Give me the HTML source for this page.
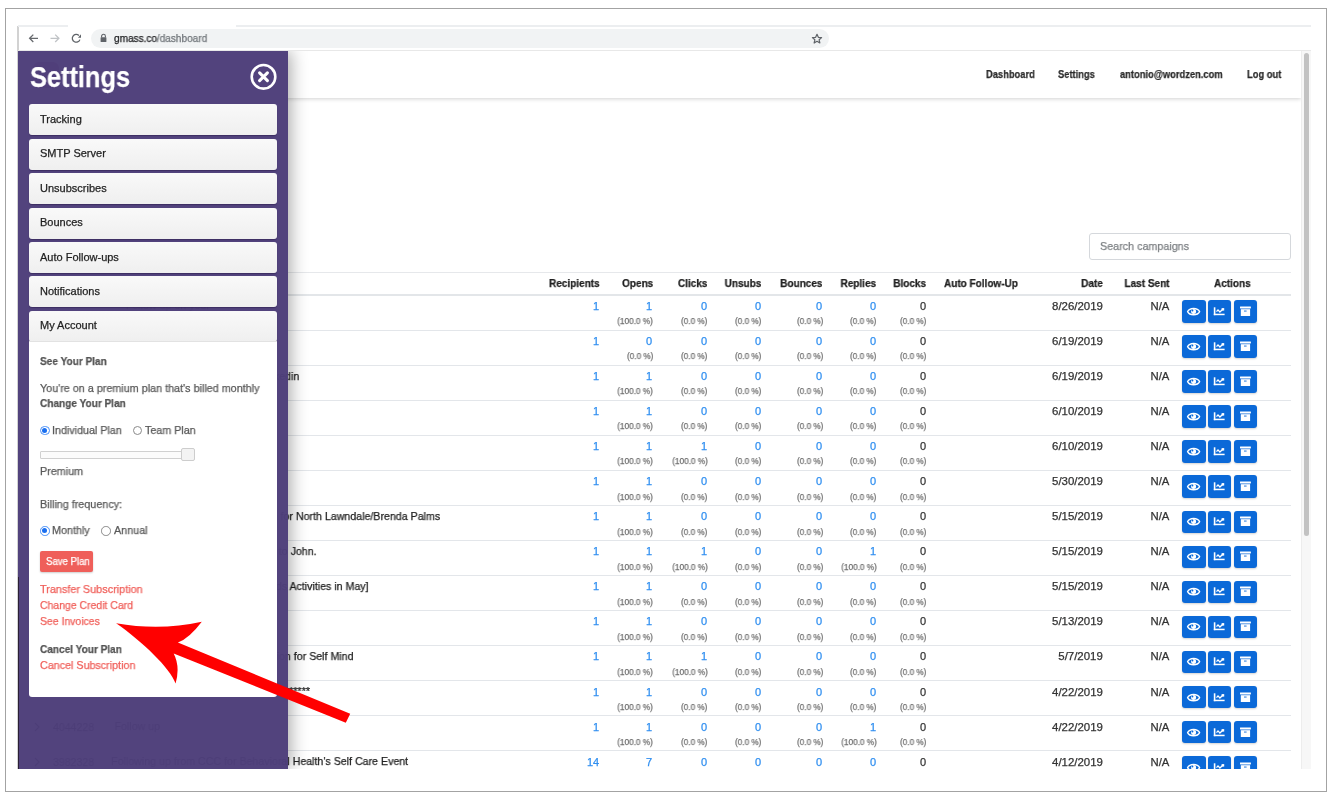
<!DOCTYPE html>
<html><head><meta charset="utf-8">
<style>
*{box-sizing:border-box;margin:0;padding:0}
html,body{width:1336px;height:800px;overflow:hidden;background:#fff}
body{position:relative;font-family:"Liberation Sans",sans-serif;color:#222}
.a{position:absolute}
.t{position:absolute;white-space:nowrap;line-height:1;will-change:transform;-webkit-text-stroke:0.25px currentColor}
.L{position:absolute;left:0;top:0;width:1336px;height:800px}
#clip{clip-path:inset(51px 25px 31px 18px)}
.hl{position:absolute;left:32px;width:1259px;height:1px;background:#e3e6ea}
.btn{position:absolute;width:23.6px;height:22.6px;border-radius:3px;background:#0b69d8;box-shadow:0 1px 2px rgba(0,0,0,.18)}
.btn svg{position:absolute;left:0;top:0.8px}
.sbtn{position:absolute;left:29px;width:248px;height:31px;border-radius:3px;background:linear-gradient(#f9f9f9,#efefef);box-shadow:0 1px 1px rgba(20,10,50,.35)}
.radio{position:absolute;width:9.5px;height:9.5px;border-radius:50%;border:1px solid #8a8a8a;background:#fff}
.radio.on{border:1px solid #4a90f7;background:#fff}
.radio.on:after{content:"";position:absolute;left:1.25px;top:1.25px;width:5px;height:5px;border-radius:50%;background:#1a6ff0}
</style></head><body>
<div class="a" style="left:5px;top:8px;width:1322px;height:784px;border:1px solid #a3a3a3"></div>
<div class="a" style="left:17px;top:25.5px;width:1.5px;height:743.5px;background:#d2d2d2"></div>
<div class="a" style="left:18px;top:25px;width:50px;height:1.5px;background:#eceef0"></div>
<div class="a" style="left:236px;top:25px;width:1075px;height:1.5px;background:#eceef0"></div>
<div class="a" style="left:18px;top:50px;width:1293px;height:1px;background:#e8e8e8"></div>
<svg class="a" style="left:26px;top:31px" width="60" height="15" viewBox="0 0 60 15">
<g fill="none" stroke-width="1.3" stroke-linecap="butt">
<path d="M3.6 7.3 H12 M7.3 3.6 L3.6 7.3 L7.3 11" stroke="#66696d"/>
<path d="M24.5 7.3 H32.9 M29.2 3.6 L32.9 7.3 L29.2 11" stroke="#c0c3c6"/>
<path d="M52.9 4.5 A3.9 3.9 0 1 0 53.9 8.6" stroke="#5f6368" stroke-width="1.25"/>
</g>
<path d="M52 6.8 L55 6.8 L55 3.3 Z" fill="#5f6368"/>
</svg>
<div class="a" style="left:91px;top:29px;width:738px;height:19px;border-radius:9.5px;background:#f1f3f4"></div>
<svg class="a" style="left:99px;top:33px" width="9" height="10" viewBox="0 0 9 10">
<path d="M2.6 4.5 V3.2 A1.9 1.9 0 0 1 6.4 3.2 V4.5" fill="none" stroke="#5f6368" stroke-width="1.1"/>
<rect x="1.6" y="4.3" width="5.8" height="4.7" rx="0.5" fill="#5f6368"/>
</svg>
<div class="t" style="top:34.33px;font-size:10.2px;color:#202124;left:114.40px;transform:scaleX(0.985);transform-origin:0 0;">gmass.co<span style="color:#70757a">/dashboard</span></div>
<svg class="a" style="left:811.2px;top:32.8px" width="12" height="12" viewBox="0 0 12 12">
<path d="M6 1.3 L7.35 4.3 L10.6 4.6 L8.15 6.8 L8.85 10 L6 8.35 L3.15 10 L3.85 6.8 L1.4 4.6 L4.65 4.3 Z" fill="none" stroke="#5f6368" stroke-width="1.2" stroke-linejoin="round"/>
</svg>
<div class="L" id="clip">
<div class="a" style="left:18px;top:51px;width:1283px;height:47px;background:#fff;box-shadow:0 1px 4px rgba(0,0,0,.18)"></div>
<div class="t" style="top:69.15px;font-size:11px;color:#2b2b2b;font-weight:bold;left:986.00px;transform:scaleX(0.85);transform-origin:0 0;">Dashboard</div>
<div class="t" style="top:69.15px;font-size:11px;color:#2b2b2b;font-weight:bold;left:1058.40px;transform:scaleX(0.85);transform-origin:0 0;">Settings</div>
<div class="t" style="top:69.15px;font-size:11px;color:#2b2b2b;font-weight:bold;left:1119.50px;transform:scaleX(0.85);transform-origin:0 0;">antonio@wordzen.com</div>
<div class="t" style="top:69.15px;font-size:11px;color:#2b2b2b;font-weight:bold;left:1247.20px;transform:scaleX(0.85);transform-origin:0 0;">Log out</div>
<div class="a" style="left:1089px;top:233px;width:202px;height:27px;border:1px solid #d5d8dc;border-radius:3px;background:#fff"></div>
<div class="t" style="top:241.22px;font-size:11.5px;color:#7d8084;left:1100.20px;transform:scaleX(0.935);transform-origin:0 0;">Search campaigns</div>
<div class="hl" style="top:272px;background:#e6e8eb"></div>
<div class="hl" style="top:294px;height:2px;background:#e3e6e9"></div>
<div class="t" style="top:278.15px;font-size:11px;color:#222;font-weight:bold;right:736.20px;transform:scaleX(0.91);transform-origin:100% 0;">Recipients</div>
<div class="t" style="top:278.15px;font-size:11px;color:#222;font-weight:bold;right:682.30px;transform:scaleX(0.91);transform-origin:100% 0;">Opens</div>
<div class="t" style="top:278.15px;font-size:11px;color:#222;font-weight:bold;right:628.40px;transform:scaleX(0.91);transform-origin:100% 0;">Clicks</div>
<div class="t" style="top:278.15px;font-size:11px;color:#222;font-weight:bold;right:574.50px;transform:scaleX(0.91);transform-origin:100% 0;">Unsubs</div>
<div class="t" style="top:278.15px;font-size:11px;color:#222;font-weight:bold;right:513.80px;transform:scaleX(0.91);transform-origin:100% 0;">Bounces</div>
<div class="t" style="top:278.15px;font-size:11px;color:#222;font-weight:bold;right:459.90px;transform:scaleX(0.91);transform-origin:100% 0;">Replies</div>
<div class="t" style="top:278.15px;font-size:11px;color:#222;font-weight:bold;right:410.10px;transform:scaleX(0.91);transform-origin:100% 0;">Blocks</div>
<div class="t" style="top:278.15px;font-size:11px;color:#222;font-weight:bold;right:233.40px;transform:scaleX(0.91);transform-origin:100% 0;">Date</div>
<div class="t" style="top:278.15px;font-size:11px;color:#222;font-weight:bold;right:166.70px;transform:scaleX(0.91);transform-origin:100% 0;">Last Sent</div>
<div class="t" style="top:278.15px;font-size:11px;color:#222;font-weight:bold;left:944.00px;transform:scaleX(0.91);transform-origin:0 0;">Auto Follow-Up</div>
<div class="t" style="top:278.15px;font-size:11px;color:#222;font-weight:bold;left:1213.60px;transform:scaleX(0.91);transform-origin:0 0;">Actions</div>
<div class="t" style="top:300.95px;font-size:11px;color:#2f8ef0;right:737.20px;">1</div>
<div class="t" style="top:300.95px;font-size:11px;color:#2f8ef0;right:683.50px;">1</div>
<div class="t" style="top:317.27px;font-size:8.5px;color:#6f6f6f;right:683.00px;transform:scaleX(0.965);transform-origin:100% 0;">(100.0 %)</div>
<div class="t" style="top:300.95px;font-size:11px;color:#2f8ef0;right:628.80px;">0</div>
<div class="t" style="top:317.27px;font-size:8.5px;color:#6f6f6f;right:628.30px;transform:scaleX(0.965);transform-origin:100% 0;">(0.0 %)</div>
<div class="t" style="top:300.95px;font-size:11px;color:#2f8ef0;right:574.70px;">0</div>
<div class="t" style="top:317.27px;font-size:8.5px;color:#6f6f6f;right:574.20px;transform:scaleX(0.965);transform-origin:100% 0;">(0.0 %)</div>
<div class="t" style="top:300.95px;font-size:11px;color:#2f8ef0;right:513.60px;">0</div>
<div class="t" style="top:317.27px;font-size:8.5px;color:#6f6f6f;right:513.10px;transform:scaleX(0.965);transform-origin:100% 0;">(0.0 %)</div>
<div class="t" style="top:300.95px;font-size:11px;color:#2f8ef0;right:459.80px;">0</div>
<div class="t" style="top:317.27px;font-size:8.5px;color:#6f6f6f;right:459.30px;transform:scaleX(0.965);transform-origin:100% 0;">(0.0 %)</div>
<div class="t" style="top:300.95px;font-size:11px;color:#333;right:409.80px;">0</div>
<div class="t" style="top:317.27px;font-size:8.5px;color:#6f6f6f;right:409.30px;transform:scaleX(0.965);transform-origin:100% 0;">(0.0 %)</div>
<div class="t" style="top:300.95px;font-size:11px;color:#333;right:233.40px;transform:scaleX(1.04);transform-origin:100% 0;">8/26/2019</div>
<div class="t" style="top:300.95px;font-size:11px;color:#333;right:166.70px;transform:scaleX(1.03);transform-origin:100% 0;">N/A</div>
<div class="btn" style="left:1181.6px;top:300.2px;width:24px"><svg width="23" height="22" viewBox="0 0 23 22"><path d="M5.6 10.6 C7.6 6.4 15.6 6.4 17.6 10.6 C15.6 14.8 7.6 14.8 5.6 10.6 Z" fill="none" stroke="#fff" stroke-width="1.35"/><circle cx="11.6" cy="10.6" r="2.5" fill="#fff"/><circle cx="10.5" cy="9.5" r="0.9" fill="#0b69d8"/></svg></div>
<div class="btn" style="left:1208.3px;top:300.2px;width:22.8px"><svg width="23" height="22" viewBox="0 0 23 22"><rect x="5.8" y="6.3" width="1.6" height="7.9" fill="#fff"/><rect x="5.8" y="12.7" width="10.8" height="1.5" fill="#fff"/><path d="M8.5 10.6 L10 8.9 L11.9 11 L14.8 8.2" fill="none" stroke="#fff" stroke-width="1.3"/><rect x="13.6" y="7.1" width="2.6" height="2.5" fill="#fff"/></svg></div>
<div class="btn" style="left:1233.9px;top:300.2px;width:22.9px"><svg width="23" height="22" viewBox="0 0 23 22"><rect x="6" y="5.5" width="10.9" height="1.9" rx="0.3" fill="#fff"/><rect x="6.8" y="8.2" width="9.3" height="6.8" fill="#fff"/><rect x="10" y="9.6" width="2.6" height="0.9" fill="#0b69d8"/></svg></div>
<div class="hl" style="top:329.80px"></div>
<div class="t" style="top:336.00px;font-size:11px;color:#2f8ef0;right:737.20px;">1</div>
<div class="t" style="top:336.00px;font-size:11px;color:#2f8ef0;right:683.50px;">0</div>
<div class="t" style="top:352.32px;font-size:8.5px;color:#6f6f6f;right:683.00px;transform:scaleX(0.965);transform-origin:100% 0;">(0.0 %)</div>
<div class="t" style="top:336.00px;font-size:11px;color:#2f8ef0;right:628.80px;">0</div>
<div class="t" style="top:352.32px;font-size:8.5px;color:#6f6f6f;right:628.30px;transform:scaleX(0.965);transform-origin:100% 0;">(0.0 %)</div>
<div class="t" style="top:336.00px;font-size:11px;color:#2f8ef0;right:574.70px;">0</div>
<div class="t" style="top:352.32px;font-size:8.5px;color:#6f6f6f;right:574.20px;transform:scaleX(0.965);transform-origin:100% 0;">(0.0 %)</div>
<div class="t" style="top:336.00px;font-size:11px;color:#2f8ef0;right:513.60px;">0</div>
<div class="t" style="top:352.32px;font-size:8.5px;color:#6f6f6f;right:513.10px;transform:scaleX(0.965);transform-origin:100% 0;">(0.0 %)</div>
<div class="t" style="top:336.00px;font-size:11px;color:#2f8ef0;right:459.80px;">0</div>
<div class="t" style="top:352.32px;font-size:8.5px;color:#6f6f6f;right:459.30px;transform:scaleX(0.965);transform-origin:100% 0;">(0.0 %)</div>
<div class="t" style="top:336.00px;font-size:11px;color:#333;right:409.80px;">0</div>
<div class="t" style="top:352.32px;font-size:8.5px;color:#6f6f6f;right:409.30px;transform:scaleX(0.965);transform-origin:100% 0;">(0.0 %)</div>
<div class="t" style="top:336.00px;font-size:11px;color:#333;right:233.40px;transform:scaleX(1.04);transform-origin:100% 0;">6/19/2019</div>
<div class="t" style="top:336.00px;font-size:11px;color:#333;right:166.70px;transform:scaleX(1.03);transform-origin:100% 0;">N/A</div>
<div class="btn" style="left:1181.6px;top:335.2px;width:24px"><svg width="23" height="22" viewBox="0 0 23 22"><path d="M5.6 10.6 C7.6 6.4 15.6 6.4 17.6 10.6 C15.6 14.8 7.6 14.8 5.6 10.6 Z" fill="none" stroke="#fff" stroke-width="1.35"/><circle cx="11.6" cy="10.6" r="2.5" fill="#fff"/><circle cx="10.5" cy="9.5" r="0.9" fill="#0b69d8"/></svg></div>
<div class="btn" style="left:1208.3px;top:335.2px;width:22.8px"><svg width="23" height="22" viewBox="0 0 23 22"><rect x="5.8" y="6.3" width="1.6" height="7.9" fill="#fff"/><rect x="5.8" y="12.7" width="10.8" height="1.5" fill="#fff"/><path d="M8.5 10.6 L10 8.9 L11.9 11 L14.8 8.2" fill="none" stroke="#fff" stroke-width="1.3"/><rect x="13.6" y="7.1" width="2.6" height="2.5" fill="#fff"/></svg></div>
<div class="btn" style="left:1233.9px;top:335.2px;width:22.9px"><svg width="23" height="22" viewBox="0 0 23 22"><rect x="6" y="5.5" width="10.9" height="1.9" rx="0.3" fill="#fff"/><rect x="6.8" y="8.2" width="9.3" height="6.8" fill="#fff"/><rect x="10" y="9.6" width="2.6" height="0.9" fill="#0b69d8"/></svg></div>
<div class="hl" style="top:364.83px"></div>
<div class="t" style="top:371.05px;font-size:11px;color:#2f8ef0;right:737.20px;">1</div>
<div class="t" style="top:371.05px;font-size:11px;color:#2f8ef0;right:683.50px;">1</div>
<div class="t" style="top:387.37px;font-size:8.5px;color:#6f6f6f;right:683.00px;transform:scaleX(0.965);transform-origin:100% 0;">(100.0 %)</div>
<div class="t" style="top:371.05px;font-size:11px;color:#2f8ef0;right:628.80px;">0</div>
<div class="t" style="top:387.37px;font-size:8.5px;color:#6f6f6f;right:628.30px;transform:scaleX(0.965);transform-origin:100% 0;">(0.0 %)</div>
<div class="t" style="top:371.05px;font-size:11px;color:#2f8ef0;right:574.70px;">0</div>
<div class="t" style="top:387.37px;font-size:8.5px;color:#6f6f6f;right:574.20px;transform:scaleX(0.965);transform-origin:100% 0;">(0.0 %)</div>
<div class="t" style="top:371.05px;font-size:11px;color:#2f8ef0;right:513.60px;">0</div>
<div class="t" style="top:387.37px;font-size:8.5px;color:#6f6f6f;right:513.10px;transform:scaleX(0.965);transform-origin:100% 0;">(0.0 %)</div>
<div class="t" style="top:371.05px;font-size:11px;color:#2f8ef0;right:459.80px;">0</div>
<div class="t" style="top:387.37px;font-size:8.5px;color:#6f6f6f;right:459.30px;transform:scaleX(0.965);transform-origin:100% 0;">(0.0 %)</div>
<div class="t" style="top:371.05px;font-size:11px;color:#333;right:409.80px;">0</div>
<div class="t" style="top:387.37px;font-size:8.5px;color:#6f6f6f;right:409.30px;transform:scaleX(0.965);transform-origin:100% 0;">(0.0 %)</div>
<div class="t" style="top:371.05px;font-size:11px;color:#333;right:233.40px;transform:scaleX(1.04);transform-origin:100% 0;">6/19/2019</div>
<div class="t" style="top:371.05px;font-size:11px;color:#333;right:166.70px;transform:scaleX(1.03);transform-origin:100% 0;">N/A</div>
<div class="btn" style="left:1181.6px;top:370.3px;width:24px"><svg width="23" height="22" viewBox="0 0 23 22"><path d="M5.6 10.6 C7.6 6.4 15.6 6.4 17.6 10.6 C15.6 14.8 7.6 14.8 5.6 10.6 Z" fill="none" stroke="#fff" stroke-width="1.35"/><circle cx="11.6" cy="10.6" r="2.5" fill="#fff"/><circle cx="10.5" cy="9.5" r="0.9" fill="#0b69d8"/></svg></div>
<div class="btn" style="left:1208.3px;top:370.3px;width:22.8px"><svg width="23" height="22" viewBox="0 0 23 22"><rect x="5.8" y="6.3" width="1.6" height="7.9" fill="#fff"/><rect x="5.8" y="12.7" width="10.8" height="1.5" fill="#fff"/><path d="M8.5 10.6 L10 8.9 L11.9 11 L14.8 8.2" fill="none" stroke="#fff" stroke-width="1.3"/><rect x="13.6" y="7.1" width="2.6" height="2.5" fill="#fff"/></svg></div>
<div class="btn" style="left:1233.9px;top:370.3px;width:22.9px"><svg width="23" height="22" viewBox="0 0 23 22"><rect x="6" y="5.5" width="10.9" height="1.9" rx="0.3" fill="#fff"/><rect x="6.8" y="8.2" width="9.3" height="6.8" fill="#fff"/><rect x="10" y="9.6" width="2.6" height="0.9" fill="#0b69d8"/></svg></div>
<div class="hl" style="top:399.86px"></div>
<div class="t" style="top:406.10px;font-size:11px;color:#2f8ef0;right:737.20px;">1</div>
<div class="t" style="top:406.10px;font-size:11px;color:#2f8ef0;right:683.50px;">1</div>
<div class="t" style="top:422.42px;font-size:8.5px;color:#6f6f6f;right:683.00px;transform:scaleX(0.965);transform-origin:100% 0;">(100.0 %)</div>
<div class="t" style="top:406.10px;font-size:11px;color:#2f8ef0;right:628.80px;">0</div>
<div class="t" style="top:422.42px;font-size:8.5px;color:#6f6f6f;right:628.30px;transform:scaleX(0.965);transform-origin:100% 0;">(0.0 %)</div>
<div class="t" style="top:406.10px;font-size:11px;color:#2f8ef0;right:574.70px;">0</div>
<div class="t" style="top:422.42px;font-size:8.5px;color:#6f6f6f;right:574.20px;transform:scaleX(0.965);transform-origin:100% 0;">(0.0 %)</div>
<div class="t" style="top:406.10px;font-size:11px;color:#2f8ef0;right:513.60px;">0</div>
<div class="t" style="top:422.42px;font-size:8.5px;color:#6f6f6f;right:513.10px;transform:scaleX(0.965);transform-origin:100% 0;">(0.0 %)</div>
<div class="t" style="top:406.10px;font-size:11px;color:#2f8ef0;right:459.80px;">0</div>
<div class="t" style="top:422.42px;font-size:8.5px;color:#6f6f6f;right:459.30px;transform:scaleX(0.965);transform-origin:100% 0;">(0.0 %)</div>
<div class="t" style="top:406.10px;font-size:11px;color:#333;right:409.80px;">0</div>
<div class="t" style="top:422.42px;font-size:8.5px;color:#6f6f6f;right:409.30px;transform:scaleX(0.965);transform-origin:100% 0;">(0.0 %)</div>
<div class="t" style="top:406.10px;font-size:11px;color:#333;right:233.40px;transform:scaleX(1.04);transform-origin:100% 0;">6/10/2019</div>
<div class="t" style="top:406.10px;font-size:11px;color:#333;right:166.70px;transform:scaleX(1.03);transform-origin:100% 0;">N/A</div>
<div class="btn" style="left:1181.6px;top:405.3px;width:24px"><svg width="23" height="22" viewBox="0 0 23 22"><path d="M5.6 10.6 C7.6 6.4 15.6 6.4 17.6 10.6 C15.6 14.8 7.6 14.8 5.6 10.6 Z" fill="none" stroke="#fff" stroke-width="1.35"/><circle cx="11.6" cy="10.6" r="2.5" fill="#fff"/><circle cx="10.5" cy="9.5" r="0.9" fill="#0b69d8"/></svg></div>
<div class="btn" style="left:1208.3px;top:405.3px;width:22.8px"><svg width="23" height="22" viewBox="0 0 23 22"><rect x="5.8" y="6.3" width="1.6" height="7.9" fill="#fff"/><rect x="5.8" y="12.7" width="10.8" height="1.5" fill="#fff"/><path d="M8.5 10.6 L10 8.9 L11.9 11 L14.8 8.2" fill="none" stroke="#fff" stroke-width="1.3"/><rect x="13.6" y="7.1" width="2.6" height="2.5" fill="#fff"/></svg></div>
<div class="btn" style="left:1233.9px;top:405.3px;width:22.9px"><svg width="23" height="22" viewBox="0 0 23 22"><rect x="6" y="5.5" width="10.9" height="1.9" rx="0.3" fill="#fff"/><rect x="6.8" y="8.2" width="9.3" height="6.8" fill="#fff"/><rect x="10" y="9.6" width="2.6" height="0.9" fill="#0b69d8"/></svg></div>
<div class="hl" style="top:434.89px"></div>
<div class="t" style="top:441.15px;font-size:11px;color:#2f8ef0;right:737.20px;">1</div>
<div class="t" style="top:441.15px;font-size:11px;color:#2f8ef0;right:683.50px;">1</div>
<div class="t" style="top:457.47px;font-size:8.5px;color:#6f6f6f;right:683.00px;transform:scaleX(0.965);transform-origin:100% 0;">(100.0 %)</div>
<div class="t" style="top:441.15px;font-size:11px;color:#2f8ef0;right:628.80px;">1</div>
<div class="t" style="top:457.47px;font-size:8.5px;color:#6f6f6f;right:628.30px;transform:scaleX(0.965);transform-origin:100% 0;">(100.0 %)</div>
<div class="t" style="top:441.15px;font-size:11px;color:#2f8ef0;right:574.70px;">0</div>
<div class="t" style="top:457.47px;font-size:8.5px;color:#6f6f6f;right:574.20px;transform:scaleX(0.965);transform-origin:100% 0;">(0.0 %)</div>
<div class="t" style="top:441.15px;font-size:11px;color:#2f8ef0;right:513.60px;">0</div>
<div class="t" style="top:457.47px;font-size:8.5px;color:#6f6f6f;right:513.10px;transform:scaleX(0.965);transform-origin:100% 0;">(0.0 %)</div>
<div class="t" style="top:441.15px;font-size:11px;color:#2f8ef0;right:459.80px;">0</div>
<div class="t" style="top:457.47px;font-size:8.5px;color:#6f6f6f;right:459.30px;transform:scaleX(0.965);transform-origin:100% 0;">(0.0 %)</div>
<div class="t" style="top:441.15px;font-size:11px;color:#333;right:409.80px;">0</div>
<div class="t" style="top:457.47px;font-size:8.5px;color:#6f6f6f;right:409.30px;transform:scaleX(0.965);transform-origin:100% 0;">(0.0 %)</div>
<div class="t" style="top:441.15px;font-size:11px;color:#333;right:233.40px;transform:scaleX(1.04);transform-origin:100% 0;">6/10/2019</div>
<div class="t" style="top:441.15px;font-size:11px;color:#333;right:166.70px;transform:scaleX(1.03);transform-origin:100% 0;">N/A</div>
<div class="btn" style="left:1181.6px;top:440.4px;width:24px"><svg width="23" height="22" viewBox="0 0 23 22"><path d="M5.6 10.6 C7.6 6.4 15.6 6.4 17.6 10.6 C15.6 14.8 7.6 14.8 5.6 10.6 Z" fill="none" stroke="#fff" stroke-width="1.35"/><circle cx="11.6" cy="10.6" r="2.5" fill="#fff"/><circle cx="10.5" cy="9.5" r="0.9" fill="#0b69d8"/></svg></div>
<div class="btn" style="left:1208.3px;top:440.4px;width:22.8px"><svg width="23" height="22" viewBox="0 0 23 22"><rect x="5.8" y="6.3" width="1.6" height="7.9" fill="#fff"/><rect x="5.8" y="12.7" width="10.8" height="1.5" fill="#fff"/><path d="M8.5 10.6 L10 8.9 L11.9 11 L14.8 8.2" fill="none" stroke="#fff" stroke-width="1.3"/><rect x="13.6" y="7.1" width="2.6" height="2.5" fill="#fff"/></svg></div>
<div class="btn" style="left:1233.9px;top:440.4px;width:22.9px"><svg width="23" height="22" viewBox="0 0 23 22"><rect x="6" y="5.5" width="10.9" height="1.9" rx="0.3" fill="#fff"/><rect x="6.8" y="8.2" width="9.3" height="6.8" fill="#fff"/><rect x="10" y="9.6" width="2.6" height="0.9" fill="#0b69d8"/></svg></div>
<div class="hl" style="top:469.92px"></div>
<div class="t" style="top:476.20px;font-size:11px;color:#2f8ef0;right:737.20px;">1</div>
<div class="t" style="top:476.20px;font-size:11px;color:#2f8ef0;right:683.50px;">1</div>
<div class="t" style="top:492.52px;font-size:8.5px;color:#6f6f6f;right:683.00px;transform:scaleX(0.965);transform-origin:100% 0;">(100.0 %)</div>
<div class="t" style="top:476.20px;font-size:11px;color:#2f8ef0;right:628.80px;">0</div>
<div class="t" style="top:492.52px;font-size:8.5px;color:#6f6f6f;right:628.30px;transform:scaleX(0.965);transform-origin:100% 0;">(0.0 %)</div>
<div class="t" style="top:476.20px;font-size:11px;color:#2f8ef0;right:574.70px;">0</div>
<div class="t" style="top:492.52px;font-size:8.5px;color:#6f6f6f;right:574.20px;transform:scaleX(0.965);transform-origin:100% 0;">(0.0 %)</div>
<div class="t" style="top:476.20px;font-size:11px;color:#2f8ef0;right:513.60px;">0</div>
<div class="t" style="top:492.52px;font-size:8.5px;color:#6f6f6f;right:513.10px;transform:scaleX(0.965);transform-origin:100% 0;">(0.0 %)</div>
<div class="t" style="top:476.20px;font-size:11px;color:#2f8ef0;right:459.80px;">0</div>
<div class="t" style="top:492.52px;font-size:8.5px;color:#6f6f6f;right:459.30px;transform:scaleX(0.965);transform-origin:100% 0;">(0.0 %)</div>
<div class="t" style="top:476.20px;font-size:11px;color:#333;right:409.80px;">0</div>
<div class="t" style="top:492.52px;font-size:8.5px;color:#6f6f6f;right:409.30px;transform:scaleX(0.965);transform-origin:100% 0;">(0.0 %)</div>
<div class="t" style="top:476.20px;font-size:11px;color:#333;right:233.40px;transform:scaleX(1.04);transform-origin:100% 0;">5/30/2019</div>
<div class="t" style="top:476.20px;font-size:11px;color:#333;right:166.70px;transform:scaleX(1.03);transform-origin:100% 0;">N/A</div>
<div class="btn" style="left:1181.6px;top:475.4px;width:24px"><svg width="23" height="22" viewBox="0 0 23 22"><path d="M5.6 10.6 C7.6 6.4 15.6 6.4 17.6 10.6 C15.6 14.8 7.6 14.8 5.6 10.6 Z" fill="none" stroke="#fff" stroke-width="1.35"/><circle cx="11.6" cy="10.6" r="2.5" fill="#fff"/><circle cx="10.5" cy="9.5" r="0.9" fill="#0b69d8"/></svg></div>
<div class="btn" style="left:1208.3px;top:475.4px;width:22.8px"><svg width="23" height="22" viewBox="0 0 23 22"><rect x="5.8" y="6.3" width="1.6" height="7.9" fill="#fff"/><rect x="5.8" y="12.7" width="10.8" height="1.5" fill="#fff"/><path d="M8.5 10.6 L10 8.9 L11.9 11 L14.8 8.2" fill="none" stroke="#fff" stroke-width="1.3"/><rect x="13.6" y="7.1" width="2.6" height="2.5" fill="#fff"/></svg></div>
<div class="btn" style="left:1233.9px;top:475.4px;width:22.9px"><svg width="23" height="22" viewBox="0 0 23 22"><rect x="6" y="5.5" width="10.9" height="1.9" rx="0.3" fill="#fff"/><rect x="6.8" y="8.2" width="9.3" height="6.8" fill="#fff"/><rect x="10" y="9.6" width="2.6" height="0.9" fill="#0b69d8"/></svg></div>
<div class="hl" style="top:504.95px"></div>
<div class="t" style="top:511.25px;font-size:11px;color:#2f8ef0;right:737.20px;">1</div>
<div class="t" style="top:511.25px;font-size:11px;color:#2f8ef0;right:683.50px;">1</div>
<div class="t" style="top:527.58px;font-size:8.5px;color:#6f6f6f;right:683.00px;transform:scaleX(0.965);transform-origin:100% 0;">(100.0 %)</div>
<div class="t" style="top:511.25px;font-size:11px;color:#2f8ef0;right:628.80px;">0</div>
<div class="t" style="top:527.58px;font-size:8.5px;color:#6f6f6f;right:628.30px;transform:scaleX(0.965);transform-origin:100% 0;">(0.0 %)</div>
<div class="t" style="top:511.25px;font-size:11px;color:#2f8ef0;right:574.70px;">0</div>
<div class="t" style="top:527.58px;font-size:8.5px;color:#6f6f6f;right:574.20px;transform:scaleX(0.965);transform-origin:100% 0;">(0.0 %)</div>
<div class="t" style="top:511.25px;font-size:11px;color:#2f8ef0;right:513.60px;">0</div>
<div class="t" style="top:527.58px;font-size:8.5px;color:#6f6f6f;right:513.10px;transform:scaleX(0.965);transform-origin:100% 0;">(0.0 %)</div>
<div class="t" style="top:511.25px;font-size:11px;color:#2f8ef0;right:459.80px;">0</div>
<div class="t" style="top:527.58px;font-size:8.5px;color:#6f6f6f;right:459.30px;transform:scaleX(0.965);transform-origin:100% 0;">(0.0 %)</div>
<div class="t" style="top:511.25px;font-size:11px;color:#333;right:409.80px;">0</div>
<div class="t" style="top:527.58px;font-size:8.5px;color:#6f6f6f;right:409.30px;transform:scaleX(0.965);transform-origin:100% 0;">(0.0 %)</div>
<div class="t" style="top:511.25px;font-size:11px;color:#333;right:233.40px;transform:scaleX(1.04);transform-origin:100% 0;">5/15/2019</div>
<div class="t" style="top:511.25px;font-size:11px;color:#333;right:166.70px;transform:scaleX(1.03);transform-origin:100% 0;">N/A</div>
<div class="btn" style="left:1181.6px;top:510.5px;width:24px"><svg width="23" height="22" viewBox="0 0 23 22"><path d="M5.6 10.6 C7.6 6.4 15.6 6.4 17.6 10.6 C15.6 14.8 7.6 14.8 5.6 10.6 Z" fill="none" stroke="#fff" stroke-width="1.35"/><circle cx="11.6" cy="10.6" r="2.5" fill="#fff"/><circle cx="10.5" cy="9.5" r="0.9" fill="#0b69d8"/></svg></div>
<div class="btn" style="left:1208.3px;top:510.5px;width:22.8px"><svg width="23" height="22" viewBox="0 0 23 22"><rect x="5.8" y="6.3" width="1.6" height="7.9" fill="#fff"/><rect x="5.8" y="12.7" width="10.8" height="1.5" fill="#fff"/><path d="M8.5 10.6 L10 8.9 L11.9 11 L14.8 8.2" fill="none" stroke="#fff" stroke-width="1.3"/><rect x="13.6" y="7.1" width="2.6" height="2.5" fill="#fff"/></svg></div>
<div class="btn" style="left:1233.9px;top:510.5px;width:22.9px"><svg width="23" height="22" viewBox="0 0 23 22"><rect x="6" y="5.5" width="10.9" height="1.9" rx="0.3" fill="#fff"/><rect x="6.8" y="8.2" width="9.3" height="6.8" fill="#fff"/><rect x="10" y="9.6" width="2.6" height="0.9" fill="#0b69d8"/></svg></div>
<div class="hl" style="top:539.98px"></div>
<div class="t" style="top:546.30px;font-size:11px;color:#2f8ef0;right:737.20px;">1</div>
<div class="t" style="top:546.30px;font-size:11px;color:#2f8ef0;right:683.50px;">1</div>
<div class="t" style="top:562.62px;font-size:8.5px;color:#6f6f6f;right:683.00px;transform:scaleX(0.965);transform-origin:100% 0;">(100.0 %)</div>
<div class="t" style="top:546.30px;font-size:11px;color:#2f8ef0;right:628.80px;">1</div>
<div class="t" style="top:562.62px;font-size:8.5px;color:#6f6f6f;right:628.30px;transform:scaleX(0.965);transform-origin:100% 0;">(100.0 %)</div>
<div class="t" style="top:546.30px;font-size:11px;color:#2f8ef0;right:574.70px;">0</div>
<div class="t" style="top:562.62px;font-size:8.5px;color:#6f6f6f;right:574.20px;transform:scaleX(0.965);transform-origin:100% 0;">(0.0 %)</div>
<div class="t" style="top:546.30px;font-size:11px;color:#2f8ef0;right:513.60px;">0</div>
<div class="t" style="top:562.62px;font-size:8.5px;color:#6f6f6f;right:513.10px;transform:scaleX(0.965);transform-origin:100% 0;">(0.0 %)</div>
<div class="t" style="top:546.30px;font-size:11px;color:#2f8ef0;right:459.80px;">1</div>
<div class="t" style="top:562.62px;font-size:8.5px;color:#6f6f6f;right:459.30px;transform:scaleX(0.965);transform-origin:100% 0;">(100.0 %)</div>
<div class="t" style="top:546.30px;font-size:11px;color:#333;right:409.80px;">0</div>
<div class="t" style="top:562.62px;font-size:8.5px;color:#6f6f6f;right:409.30px;transform:scaleX(0.965);transform-origin:100% 0;">(0.0 %)</div>
<div class="t" style="top:546.30px;font-size:11px;color:#333;right:233.40px;transform:scaleX(1.04);transform-origin:100% 0;">5/15/2019</div>
<div class="t" style="top:546.30px;font-size:11px;color:#333;right:166.70px;transform:scaleX(1.03);transform-origin:100% 0;">N/A</div>
<div class="btn" style="left:1181.6px;top:545.5px;width:24px"><svg width="23" height="22" viewBox="0 0 23 22"><path d="M5.6 10.6 C7.6 6.4 15.6 6.4 17.6 10.6 C15.6 14.8 7.6 14.8 5.6 10.6 Z" fill="none" stroke="#fff" stroke-width="1.35"/><circle cx="11.6" cy="10.6" r="2.5" fill="#fff"/><circle cx="10.5" cy="9.5" r="0.9" fill="#0b69d8"/></svg></div>
<div class="btn" style="left:1208.3px;top:545.5px;width:22.8px"><svg width="23" height="22" viewBox="0 0 23 22"><rect x="5.8" y="6.3" width="1.6" height="7.9" fill="#fff"/><rect x="5.8" y="12.7" width="10.8" height="1.5" fill="#fff"/><path d="M8.5 10.6 L10 8.9 L11.9 11 L14.8 8.2" fill="none" stroke="#fff" stroke-width="1.3"/><rect x="13.6" y="7.1" width="2.6" height="2.5" fill="#fff"/></svg></div>
<div class="btn" style="left:1233.9px;top:545.5px;width:22.9px"><svg width="23" height="22" viewBox="0 0 23 22"><rect x="6" y="5.5" width="10.9" height="1.9" rx="0.3" fill="#fff"/><rect x="6.8" y="8.2" width="9.3" height="6.8" fill="#fff"/><rect x="10" y="9.6" width="2.6" height="0.9" fill="#0b69d8"/></svg></div>
<div class="hl" style="top:575.01px"></div>
<div class="t" style="top:581.35px;font-size:11px;color:#2f8ef0;right:737.20px;">1</div>
<div class="t" style="top:581.35px;font-size:11px;color:#2f8ef0;right:683.50px;">1</div>
<div class="t" style="top:597.68px;font-size:8.5px;color:#6f6f6f;right:683.00px;transform:scaleX(0.965);transform-origin:100% 0;">(100.0 %)</div>
<div class="t" style="top:581.35px;font-size:11px;color:#2f8ef0;right:628.80px;">0</div>
<div class="t" style="top:597.68px;font-size:8.5px;color:#6f6f6f;right:628.30px;transform:scaleX(0.965);transform-origin:100% 0;">(0.0 %)</div>
<div class="t" style="top:581.35px;font-size:11px;color:#2f8ef0;right:574.70px;">0</div>
<div class="t" style="top:597.68px;font-size:8.5px;color:#6f6f6f;right:574.20px;transform:scaleX(0.965);transform-origin:100% 0;">(0.0 %)</div>
<div class="t" style="top:581.35px;font-size:11px;color:#2f8ef0;right:513.60px;">0</div>
<div class="t" style="top:597.68px;font-size:8.5px;color:#6f6f6f;right:513.10px;transform:scaleX(0.965);transform-origin:100% 0;">(0.0 %)</div>
<div class="t" style="top:581.35px;font-size:11px;color:#2f8ef0;right:459.80px;">0</div>
<div class="t" style="top:597.68px;font-size:8.5px;color:#6f6f6f;right:459.30px;transform:scaleX(0.965);transform-origin:100% 0;">(0.0 %)</div>
<div class="t" style="top:581.35px;font-size:11px;color:#333;right:409.80px;">0</div>
<div class="t" style="top:597.68px;font-size:8.5px;color:#6f6f6f;right:409.30px;transform:scaleX(0.965);transform-origin:100% 0;">(0.0 %)</div>
<div class="t" style="top:581.35px;font-size:11px;color:#333;right:233.40px;transform:scaleX(1.04);transform-origin:100% 0;">5/15/2019</div>
<div class="t" style="top:581.35px;font-size:11px;color:#333;right:166.70px;transform:scaleX(1.03);transform-origin:100% 0;">N/A</div>
<div class="btn" style="left:1181.6px;top:580.6px;width:24px"><svg width="23" height="22" viewBox="0 0 23 22"><path d="M5.6 10.6 C7.6 6.4 15.6 6.4 17.6 10.6 C15.6 14.8 7.6 14.8 5.6 10.6 Z" fill="none" stroke="#fff" stroke-width="1.35"/><circle cx="11.6" cy="10.6" r="2.5" fill="#fff"/><circle cx="10.5" cy="9.5" r="0.9" fill="#0b69d8"/></svg></div>
<div class="btn" style="left:1208.3px;top:580.6px;width:22.8px"><svg width="23" height="22" viewBox="0 0 23 22"><rect x="5.8" y="6.3" width="1.6" height="7.9" fill="#fff"/><rect x="5.8" y="12.7" width="10.8" height="1.5" fill="#fff"/><path d="M8.5 10.6 L10 8.9 L11.9 11 L14.8 8.2" fill="none" stroke="#fff" stroke-width="1.3"/><rect x="13.6" y="7.1" width="2.6" height="2.5" fill="#fff"/></svg></div>
<div class="btn" style="left:1233.9px;top:580.6px;width:22.9px"><svg width="23" height="22" viewBox="0 0 23 22"><rect x="6" y="5.5" width="10.9" height="1.9" rx="0.3" fill="#fff"/><rect x="6.8" y="8.2" width="9.3" height="6.8" fill="#fff"/><rect x="10" y="9.6" width="2.6" height="0.9" fill="#0b69d8"/></svg></div>
<div class="hl" style="top:610.04px"></div>
<div class="t" style="top:616.40px;font-size:11px;color:#2f8ef0;right:737.20px;">1</div>
<div class="t" style="top:616.40px;font-size:11px;color:#2f8ef0;right:683.50px;">1</div>
<div class="t" style="top:632.73px;font-size:8.5px;color:#6f6f6f;right:683.00px;transform:scaleX(0.965);transform-origin:100% 0;">(100.0 %)</div>
<div class="t" style="top:616.40px;font-size:11px;color:#2f8ef0;right:628.80px;">0</div>
<div class="t" style="top:632.73px;font-size:8.5px;color:#6f6f6f;right:628.30px;transform:scaleX(0.965);transform-origin:100% 0;">(0.0 %)</div>
<div class="t" style="top:616.40px;font-size:11px;color:#2f8ef0;right:574.70px;">0</div>
<div class="t" style="top:632.73px;font-size:8.5px;color:#6f6f6f;right:574.20px;transform:scaleX(0.965);transform-origin:100% 0;">(0.0 %)</div>
<div class="t" style="top:616.40px;font-size:11px;color:#2f8ef0;right:513.60px;">0</div>
<div class="t" style="top:632.73px;font-size:8.5px;color:#6f6f6f;right:513.10px;transform:scaleX(0.965);transform-origin:100% 0;">(0.0 %)</div>
<div class="t" style="top:616.40px;font-size:11px;color:#2f8ef0;right:459.80px;">0</div>
<div class="t" style="top:632.73px;font-size:8.5px;color:#6f6f6f;right:459.30px;transform:scaleX(0.965);transform-origin:100% 0;">(0.0 %)</div>
<div class="t" style="top:616.40px;font-size:11px;color:#333;right:409.80px;">0</div>
<div class="t" style="top:632.73px;font-size:8.5px;color:#6f6f6f;right:409.30px;transform:scaleX(0.965);transform-origin:100% 0;">(0.0 %)</div>
<div class="t" style="top:616.40px;font-size:11px;color:#333;right:233.40px;transform:scaleX(1.04);transform-origin:100% 0;">5/13/2019</div>
<div class="t" style="top:616.40px;font-size:11px;color:#333;right:166.70px;transform:scaleX(1.03);transform-origin:100% 0;">N/A</div>
<div class="btn" style="left:1181.6px;top:615.6px;width:24px"><svg width="23" height="22" viewBox="0 0 23 22"><path d="M5.6 10.6 C7.6 6.4 15.6 6.4 17.6 10.6 C15.6 14.8 7.6 14.8 5.6 10.6 Z" fill="none" stroke="#fff" stroke-width="1.35"/><circle cx="11.6" cy="10.6" r="2.5" fill="#fff"/><circle cx="10.5" cy="9.5" r="0.9" fill="#0b69d8"/></svg></div>
<div class="btn" style="left:1208.3px;top:615.6px;width:22.8px"><svg width="23" height="22" viewBox="0 0 23 22"><rect x="5.8" y="6.3" width="1.6" height="7.9" fill="#fff"/><rect x="5.8" y="12.7" width="10.8" height="1.5" fill="#fff"/><path d="M8.5 10.6 L10 8.9 L11.9 11 L14.8 8.2" fill="none" stroke="#fff" stroke-width="1.3"/><rect x="13.6" y="7.1" width="2.6" height="2.5" fill="#fff"/></svg></div>
<div class="btn" style="left:1233.9px;top:615.6px;width:22.9px"><svg width="23" height="22" viewBox="0 0 23 22"><rect x="6" y="5.5" width="10.9" height="1.9" rx="0.3" fill="#fff"/><rect x="6.8" y="8.2" width="9.3" height="6.8" fill="#fff"/><rect x="10" y="9.6" width="2.6" height="0.9" fill="#0b69d8"/></svg></div>
<div class="hl" style="top:645.07px"></div>
<div class="t" style="top:651.45px;font-size:11px;color:#2f8ef0;right:737.20px;">1</div>
<div class="t" style="top:651.45px;font-size:11px;color:#2f8ef0;right:683.50px;">1</div>
<div class="t" style="top:667.77px;font-size:8.5px;color:#6f6f6f;right:683.00px;transform:scaleX(0.965);transform-origin:100% 0;">(100.0 %)</div>
<div class="t" style="top:651.45px;font-size:11px;color:#2f8ef0;right:628.80px;">1</div>
<div class="t" style="top:667.77px;font-size:8.5px;color:#6f6f6f;right:628.30px;transform:scaleX(0.965);transform-origin:100% 0;">(100.0 %)</div>
<div class="t" style="top:651.45px;font-size:11px;color:#2f8ef0;right:574.70px;">0</div>
<div class="t" style="top:667.77px;font-size:8.5px;color:#6f6f6f;right:574.20px;transform:scaleX(0.965);transform-origin:100% 0;">(0.0 %)</div>
<div class="t" style="top:651.45px;font-size:11px;color:#2f8ef0;right:513.60px;">0</div>
<div class="t" style="top:667.77px;font-size:8.5px;color:#6f6f6f;right:513.10px;transform:scaleX(0.965);transform-origin:100% 0;">(0.0 %)</div>
<div class="t" style="top:651.45px;font-size:11px;color:#2f8ef0;right:459.80px;">0</div>
<div class="t" style="top:667.77px;font-size:8.5px;color:#6f6f6f;right:459.30px;transform:scaleX(0.965);transform-origin:100% 0;">(0.0 %)</div>
<div class="t" style="top:651.45px;font-size:11px;color:#333;right:409.80px;">0</div>
<div class="t" style="top:667.77px;font-size:8.5px;color:#6f6f6f;right:409.30px;transform:scaleX(0.965);transform-origin:100% 0;">(0.0 %)</div>
<div class="t" style="top:651.45px;font-size:11px;color:#333;right:233.40px;transform:scaleX(1.04);transform-origin:100% 0;">5/7/2019</div>
<div class="t" style="top:651.45px;font-size:11px;color:#333;right:166.70px;transform:scaleX(1.03);transform-origin:100% 0;">N/A</div>
<div class="btn" style="left:1181.6px;top:650.7px;width:24px"><svg width="23" height="22" viewBox="0 0 23 22"><path d="M5.6 10.6 C7.6 6.4 15.6 6.4 17.6 10.6 C15.6 14.8 7.6 14.8 5.6 10.6 Z" fill="none" stroke="#fff" stroke-width="1.35"/><circle cx="11.6" cy="10.6" r="2.5" fill="#fff"/><circle cx="10.5" cy="9.5" r="0.9" fill="#0b69d8"/></svg></div>
<div class="btn" style="left:1208.3px;top:650.7px;width:22.8px"><svg width="23" height="22" viewBox="0 0 23 22"><rect x="5.8" y="6.3" width="1.6" height="7.9" fill="#fff"/><rect x="5.8" y="12.7" width="10.8" height="1.5" fill="#fff"/><path d="M8.5 10.6 L10 8.9 L11.9 11 L14.8 8.2" fill="none" stroke="#fff" stroke-width="1.3"/><rect x="13.6" y="7.1" width="2.6" height="2.5" fill="#fff"/></svg></div>
<div class="btn" style="left:1233.9px;top:650.7px;width:22.9px"><svg width="23" height="22" viewBox="0 0 23 22"><rect x="6" y="5.5" width="10.9" height="1.9" rx="0.3" fill="#fff"/><rect x="6.8" y="8.2" width="9.3" height="6.8" fill="#fff"/><rect x="10" y="9.6" width="2.6" height="0.9" fill="#0b69d8"/></svg></div>
<div class="hl" style="top:680.10px"></div>
<div class="t" style="top:686.50px;font-size:11px;color:#2f8ef0;right:737.20px;">1</div>
<div class="t" style="top:686.50px;font-size:11px;color:#2f8ef0;right:683.50px;">1</div>
<div class="t" style="top:702.82px;font-size:8.5px;color:#6f6f6f;right:683.00px;transform:scaleX(0.965);transform-origin:100% 0;">(100.0 %)</div>
<div class="t" style="top:686.50px;font-size:11px;color:#2f8ef0;right:628.80px;">0</div>
<div class="t" style="top:702.82px;font-size:8.5px;color:#6f6f6f;right:628.30px;transform:scaleX(0.965);transform-origin:100% 0;">(0.0 %)</div>
<div class="t" style="top:686.50px;font-size:11px;color:#2f8ef0;right:574.70px;">0</div>
<div class="t" style="top:702.82px;font-size:8.5px;color:#6f6f6f;right:574.20px;transform:scaleX(0.965);transform-origin:100% 0;">(0.0 %)</div>
<div class="t" style="top:686.50px;font-size:11px;color:#2f8ef0;right:513.60px;">0</div>
<div class="t" style="top:702.82px;font-size:8.5px;color:#6f6f6f;right:513.10px;transform:scaleX(0.965);transform-origin:100% 0;">(0.0 %)</div>
<div class="t" style="top:686.50px;font-size:11px;color:#2f8ef0;right:459.80px;">0</div>
<div class="t" style="top:702.82px;font-size:8.5px;color:#6f6f6f;right:459.30px;transform:scaleX(0.965);transform-origin:100% 0;">(0.0 %)</div>
<div class="t" style="top:686.50px;font-size:11px;color:#333;right:409.80px;">0</div>
<div class="t" style="top:702.82px;font-size:8.5px;color:#6f6f6f;right:409.30px;transform:scaleX(0.965);transform-origin:100% 0;">(0.0 %)</div>
<div class="t" style="top:686.50px;font-size:11px;color:#333;right:233.40px;transform:scaleX(1.04);transform-origin:100% 0;">4/22/2019</div>
<div class="t" style="top:686.50px;font-size:11px;color:#333;right:166.70px;transform:scaleX(1.03);transform-origin:100% 0;">N/A</div>
<div class="btn" style="left:1181.6px;top:685.8px;width:24px"><svg width="23" height="22" viewBox="0 0 23 22"><path d="M5.6 10.6 C7.6 6.4 15.6 6.4 17.6 10.6 C15.6 14.8 7.6 14.8 5.6 10.6 Z" fill="none" stroke="#fff" stroke-width="1.35"/><circle cx="11.6" cy="10.6" r="2.5" fill="#fff"/><circle cx="10.5" cy="9.5" r="0.9" fill="#0b69d8"/></svg></div>
<div class="btn" style="left:1208.3px;top:685.8px;width:22.8px"><svg width="23" height="22" viewBox="0 0 23 22"><rect x="5.8" y="6.3" width="1.6" height="7.9" fill="#fff"/><rect x="5.8" y="12.7" width="10.8" height="1.5" fill="#fff"/><path d="M8.5 10.6 L10 8.9 L11.9 11 L14.8 8.2" fill="none" stroke="#fff" stroke-width="1.3"/><rect x="13.6" y="7.1" width="2.6" height="2.5" fill="#fff"/></svg></div>
<div class="btn" style="left:1233.9px;top:685.8px;width:22.9px"><svg width="23" height="22" viewBox="0 0 23 22"><rect x="6" y="5.5" width="10.9" height="1.9" rx="0.3" fill="#fff"/><rect x="6.8" y="8.2" width="9.3" height="6.8" fill="#fff"/><rect x="10" y="9.6" width="2.6" height="0.9" fill="#0b69d8"/></svg></div>
<div class="hl" style="top:715.13px"></div>
<div class="t" style="top:721.55px;font-size:11px;color:#2f8ef0;right:737.20px;">1</div>
<div class="t" style="top:721.55px;font-size:11px;color:#2f8ef0;right:683.50px;">1</div>
<div class="t" style="top:737.88px;font-size:8.5px;color:#6f6f6f;right:683.00px;transform:scaleX(0.965);transform-origin:100% 0;">(100.0 %)</div>
<div class="t" style="top:721.55px;font-size:11px;color:#2f8ef0;right:628.80px;">0</div>
<div class="t" style="top:737.88px;font-size:8.5px;color:#6f6f6f;right:628.30px;transform:scaleX(0.965);transform-origin:100% 0;">(0.0 %)</div>
<div class="t" style="top:721.55px;font-size:11px;color:#2f8ef0;right:574.70px;">0</div>
<div class="t" style="top:737.88px;font-size:8.5px;color:#6f6f6f;right:574.20px;transform:scaleX(0.965);transform-origin:100% 0;">(0.0 %)</div>
<div class="t" style="top:721.55px;font-size:11px;color:#2f8ef0;right:513.60px;">0</div>
<div class="t" style="top:737.88px;font-size:8.5px;color:#6f6f6f;right:513.10px;transform:scaleX(0.965);transform-origin:100% 0;">(0.0 %)</div>
<div class="t" style="top:721.55px;font-size:11px;color:#2f8ef0;right:459.80px;">1</div>
<div class="t" style="top:737.88px;font-size:8.5px;color:#6f6f6f;right:459.30px;transform:scaleX(0.965);transform-origin:100% 0;">(100.0 %)</div>
<div class="t" style="top:721.55px;font-size:11px;color:#333;right:409.80px;">0</div>
<div class="t" style="top:737.88px;font-size:8.5px;color:#6f6f6f;right:409.30px;transform:scaleX(0.965);transform-origin:100% 0;">(0.0 %)</div>
<div class="t" style="top:721.55px;font-size:11px;color:#333;right:233.40px;transform:scaleX(1.04);transform-origin:100% 0;">4/22/2019</div>
<div class="t" style="top:721.55px;font-size:11px;color:#333;right:166.70px;transform:scaleX(1.03);transform-origin:100% 0;">N/A</div>
<div class="btn" style="left:1181.6px;top:720.8px;width:24px"><svg width="23" height="22" viewBox="0 0 23 22"><path d="M5.6 10.6 C7.6 6.4 15.6 6.4 17.6 10.6 C15.6 14.8 7.6 14.8 5.6 10.6 Z" fill="none" stroke="#fff" stroke-width="1.35"/><circle cx="11.6" cy="10.6" r="2.5" fill="#fff"/><circle cx="10.5" cy="9.5" r="0.9" fill="#0b69d8"/></svg></div>
<div class="btn" style="left:1208.3px;top:720.8px;width:22.8px"><svg width="23" height="22" viewBox="0 0 23 22"><rect x="5.8" y="6.3" width="1.6" height="7.9" fill="#fff"/><rect x="5.8" y="12.7" width="10.8" height="1.5" fill="#fff"/><path d="M8.5 10.6 L10 8.9 L11.9 11 L14.8 8.2" fill="none" stroke="#fff" stroke-width="1.3"/><rect x="13.6" y="7.1" width="2.6" height="2.5" fill="#fff"/></svg></div>
<div class="btn" style="left:1233.9px;top:720.8px;width:22.9px"><svg width="23" height="22" viewBox="0 0 23 22"><rect x="6" y="5.5" width="10.9" height="1.9" rx="0.3" fill="#fff"/><rect x="6.8" y="8.2" width="9.3" height="6.8" fill="#fff"/><rect x="10" y="9.6" width="2.6" height="0.9" fill="#0b69d8"/></svg></div>
<div class="hl" style="top:750.16px"></div>
<div class="t" style="top:756.60px;font-size:11px;color:#2f8ef0;right:737.20px;">14</div>
<div class="t" style="top:756.60px;font-size:11px;color:#2f8ef0;right:683.50px;">7</div>
<div class="t" style="top:756.60px;font-size:11px;color:#2f8ef0;right:628.80px;">0</div>
<div class="t" style="top:756.60px;font-size:11px;color:#2f8ef0;right:574.70px;">0</div>
<div class="t" style="top:756.60px;font-size:11px;color:#2f8ef0;right:513.60px;">0</div>
<div class="t" style="top:756.60px;font-size:11px;color:#2f8ef0;right:459.80px;">0</div>
<div class="t" style="top:756.60px;font-size:11px;color:#333;right:409.80px;">0</div>
<div class="t" style="top:756.60px;font-size:11px;color:#333;right:233.40px;transform:scaleX(1.04);transform-origin:100% 0;">4/12/2019</div>
<div class="t" style="top:756.60px;font-size:11px;color:#333;right:166.70px;transform:scaleX(1.03);transform-origin:100% 0;">N/A</div>
<div class="btn" style="left:1181.6px;top:755.8px;width:24px"><svg width="23" height="22" viewBox="0 0 23 22"><path d="M5.6 10.6 C7.6 6.4 15.6 6.4 17.6 10.6 C15.6 14.8 7.6 14.8 5.6 10.6 Z" fill="none" stroke="#fff" stroke-width="1.35"/><circle cx="11.6" cy="10.6" r="2.5" fill="#fff"/><circle cx="10.5" cy="9.5" r="0.9" fill="#0b69d8"/></svg></div>
<div class="btn" style="left:1208.3px;top:755.8px;width:22.8px"><svg width="23" height="22" viewBox="0 0 23 22"><rect x="5.8" y="6.3" width="1.6" height="7.9" fill="#fff"/><rect x="5.8" y="12.7" width="10.8" height="1.5" fill="#fff"/><path d="M8.5 10.6 L10 8.9 L11.9 11 L14.8 8.2" fill="none" stroke="#fff" stroke-width="1.3"/><rect x="13.6" y="7.1" width="2.6" height="2.5" fill="#fff"/></svg></div>
<div class="btn" style="left:1233.9px;top:755.8px;width:22.9px"><svg width="23" height="22" viewBox="0 0 23 22"><rect x="6" y="5.5" width="10.9" height="1.9" rx="0.3" fill="#fff"/><rect x="6.8" y="8.2" width="9.3" height="6.8" fill="#fff"/><rect x="10" y="9.6" width="2.6" height="0.9" fill="#0b69d8"/></svg></div>
<div class="t" style="top:300.45px;font-size:11px;color:#222;right:1126.00px;transform:scaleX(0.967);transform-origin:100% 0;">Follow up on your</div>
<div class="t" style="top:335.50px;font-size:11px;color:#222;right:1136.00px;transform:scaleX(0.967);transform-origin:100% 0;">Quick question</div>
<div class="t" style="top:370.55px;font-size:11px;color:#222;right:1036.40px;transform:scaleX(0.967);transform-origin:100% 0;">Connect on Linkedin</div>
<div class="t" style="top:405.60px;font-size:11px;color:#222;right:1156.00px;transform:scaleX(0.967);transform-origin:100% 0;">Checking in</div>
<div class="t" style="top:440.65px;font-size:11px;color:#222;right:1156.00px;transform:scaleX(0.967);transform-origin:100% 0;">Hello there</div>
<div class="t" style="top:475.70px;font-size:11px;color:#222;right:1176.00px;transform:scaleX(0.967);transform-origin:100% 0;">Follow up</div>
<div class="t" style="top:510.75px;font-size:11px;color:#222;right:895.80px;transform:scaleX(0.967);transform-origin:100% 0;">Information for North Lawndale/Brenda Palms</div>
<div class="t" style="top:545.80px;font-size:11px;color:#222;right:1019.40px;transform:scaleX(0.967);transform-origin:100% 0;">Thank you to John.</div>
<div class="t" style="top:580.85px;font-size:11px;color:#222;right:967.80px;transform:scaleX(0.967);transform-origin:100% 0;">Reminder: [Kids Activities in May]</div>
<div class="t" style="top:615.90px;font-size:11px;color:#222;right:1146.00px;transform:scaleX(0.967);transform-origin:100% 0;">Your request</div>
<div class="t" style="top:650.95px;font-size:11px;color:#222;right:982.20px;transform:scaleX(0.967);transform-origin:100% 0;">Registration for Self Mind</div>
<div class="t" style="top:686.00px;font-size:11px;color:#222;right:1026.40px;transform:scaleX(0.967);transform-origin:100% 0;">*******</div>
<div class="t" style="top:721.05px;font-size:11px;color:#222;right:1175.80px;transform:scaleX(0.967);transform-origin:100% 0;">Follow up</div>
<div class="t" style="top:756.10px;font-size:11px;color:#222;right:928.20px;transform:scaleX(0.967);transform-origin:100% 0;">Following up from CCC for Behavioral Health's Self Care Event</div>
<div class="t" style="top:721.55px;font-size:11px;color:#222;left:52.60px;transform:scaleX(0.96);transform-origin:0 0;">4044228</div>
<svg class="a" style="left:33px;top:721.9px" width="8" height="10" viewBox="0 0 8 10"><path d="M2 1 L6 5 L2 9" fill="none" stroke="#222" stroke-width="1.4"/></svg>
<div class="t" style="top:756.60px;font-size:11px;color:#222;left:52.60px;transform:scaleX(0.96);transform-origin:0 0;">3982328</div>
<svg class="a" style="left:33px;top:757.0px" width="8" height="10" viewBox="0 0 8 10"><path d="M2 1 L6 5 L2 9" fill="none" stroke="#222" stroke-width="1.4"/></svg>
<div class="a" style="left:33px;top:62px;width:26px;height:26px;border-radius:6px;background:#a85a78"></div>
<div class="a" style="left:1301px;top:51px;width:10px;height:718px;background:#f7f7f7;border-left:1px solid #ededed"></div>
<div class="a" style="left:1304px;top:53px;width:5px;height:483px;border-radius:3px;background:#c2c2c2"></div>
<div class="a" style="left:18px;top:51px;width:270px;height:718px;background:rgba(78,62,122,.975);box-shadow:3px 0 16px rgba(0,0,0,.33)"></div>
<div class="a" style="left:17px;top:577px;width:1.5px;height:192px;background:#2b1f35"></div>
<div class="t" style="top:62.65px;font-size:29px;color:#fff;font-weight:bold;left:30.30px;transform:scaleX(0.875);transform-origin:0 0;">Settings</div>
<svg class="a" style="left:249px;top:62px" width="29" height="29" viewBox="0 0 29 29">
<circle cx="14.5" cy="14.8" r="11.8" fill="none" stroke="#fff" stroke-width="2.6"/>
<path d="M10.6 10.9 L18.4 18.7 M18.4 10.9 L10.6 18.7" stroke="#fff" stroke-width="3.1" stroke-linecap="round"/>
</svg>
<div class="sbtn" style="top:104.3px"></div>
<div class="t" style="top:113.95px;font-size:11px;color:#1f1f1f;left:40.30px;">Tracking</div>
<div class="sbtn" style="top:138.7px"></div>
<div class="t" style="top:148.35px;font-size:11px;color:#1f1f1f;left:40.30px;">SMTP Server</div>
<div class="sbtn" style="top:173.0px"></div>
<div class="t" style="top:182.65px;font-size:11px;color:#1f1f1f;left:40.30px;">Unsubscribes</div>
<div class="sbtn" style="top:207.5px"></div>
<div class="t" style="top:217.15px;font-size:11px;color:#1f1f1f;left:40.30px;">Bounces</div>
<div class="sbtn" style="top:241.9px"></div>
<div class="t" style="top:251.55px;font-size:11px;color:#1f1f1f;left:40.30px;">Auto Follow-ups</div>
<div class="sbtn" style="top:276.3px"></div>
<div class="t" style="top:285.95px;font-size:11px;color:#1f1f1f;left:40.30px;">Notifications</div>
<div class="sbtn" style="top:310.7px"></div>
<div class="t" style="top:320.35px;font-size:11px;color:#1f1f1f;left:40.30px;">My Account</div>
<div class="a" style="left:29px;top:341px;width:248px;height:356px;background:#fff;border-radius:0 0 3px 3px;border-top:1px solid #e2e2e2"></div>
<div class="t" style="top:355.85px;font-size:11px;color:#535353;font-weight:bold;left:40.00px;transform:scaleX(0.915);transform-origin:0 0;">See Your Plan</div>
<div class="t" style="top:382.55px;font-size:11px;color:#585858;left:40.00px;transform:scaleX(0.98);transform-origin:0 0;">You're on a premium plan that's billed monthly</div>
<div class="t" style="top:398.15px;font-size:11px;color:#535353;font-weight:bold;left:40.00px;transform:scaleX(0.915);transform-origin:0 0;">Change Your Plan</div>
<div class="radio on" style="left:40px;top:425.5px"></div>
<div class="t" style="top:424.65px;font-size:11px;color:#585858;left:52.30px;transform:scaleX(0.975);transform-origin:0 0;">Individual Plan</div>
<div class="radio" style="left:132.5px;top:425.5px"></div>
<div class="t" style="top:424.65px;font-size:11px;color:#585858;left:145.20px;transform:scaleX(0.975);transform-origin:0 0;">Team Plan</div>
<div class="a" style="left:40px;top:450.5px;width:150px;height:8px;border:1px solid #d0d0d0;border-radius:1px;background:#fbfbfb"></div>
<div class="a" style="left:181px;top:448px;width:14px;height:13px;border:1px solid #cdcdcd;border-radius:2px;background:#f3f3f3"></div>
<div class="t" style="top:466.05px;font-size:11px;color:#585858;left:40.00px;transform:scaleX(0.98);transform-origin:0 0;">Premium</div>
<div class="t" style="top:498.65px;font-size:11px;color:#585858;left:40.00px;transform:scaleX(0.98);transform-origin:0 0;">Billing frequency:</div>
<div class="radio on" style="left:40px;top:526px"></div>
<div class="t" style="top:525.15px;font-size:11px;color:#585858;left:52.30px;transform:scaleX(0.98);transform-origin:0 0;">Monthly</div>
<div class="radio" style="left:101.2px;top:526px"></div>
<div class="t" style="top:525.15px;font-size:11px;color:#585858;left:113.80px;transform:scaleX(0.98);transform-origin:0 0;">Annual</div>
<div class="a" style="left:40px;top:551px;width:53px;height:21px;border-radius:2px;background:#ef5f5a;box-shadow:0 1px 2px rgba(0,0,0,.2)"></div>
<div class="t" style="top:556.80px;font-size:10px;color:#fff;left:45.60px;transform:scaleX(0.96);transform-origin:0 0;">Save Plan</div>
<div class="t" style="top:584.35px;font-size:11px;color:#f0605b;left:40.00px;transform:scaleX(0.985);transform-origin:0 0;">Transfer Subscription</div>
<div class="t" style="top:600.25px;font-size:11px;color:#f0605b;left:40.00px;transform:scaleX(0.95);transform-origin:0 0;">Change Credit Card</div>
<div class="t" style="top:616.35px;font-size:11px;color:#f0605b;left:40.00px;transform:scaleX(0.95);transform-origin:0 0;">See Invoices</div>
<div class="t" style="top:643.55px;font-size:11px;color:#535353;font-weight:bold;left:40.00px;transform:scaleX(0.915);transform-origin:0 0;">Cancel Your Plan</div>
<div class="t" style="top:659.55px;font-size:11px;color:#f0605b;left:40.00px;transform:scaleX(0.975);transform-origin:0 0;">Cancel Subscription</div>
</div>
<svg class="a" style="left:0;top:0" width="1336" height="800" viewBox="0 0 1336 800">
<path d="M116.1 623.2 Q160 631 201.8 621.7 Q189.5 638 177.9 642.6 L350.2 713.8 L345.8 722.7 L173.7 653.4 Q180.4 666.6 175.6 683.4 C170 668 143 642 116.1 623.2 Z" fill="#ff0000"/>
</svg>
</body></html>
